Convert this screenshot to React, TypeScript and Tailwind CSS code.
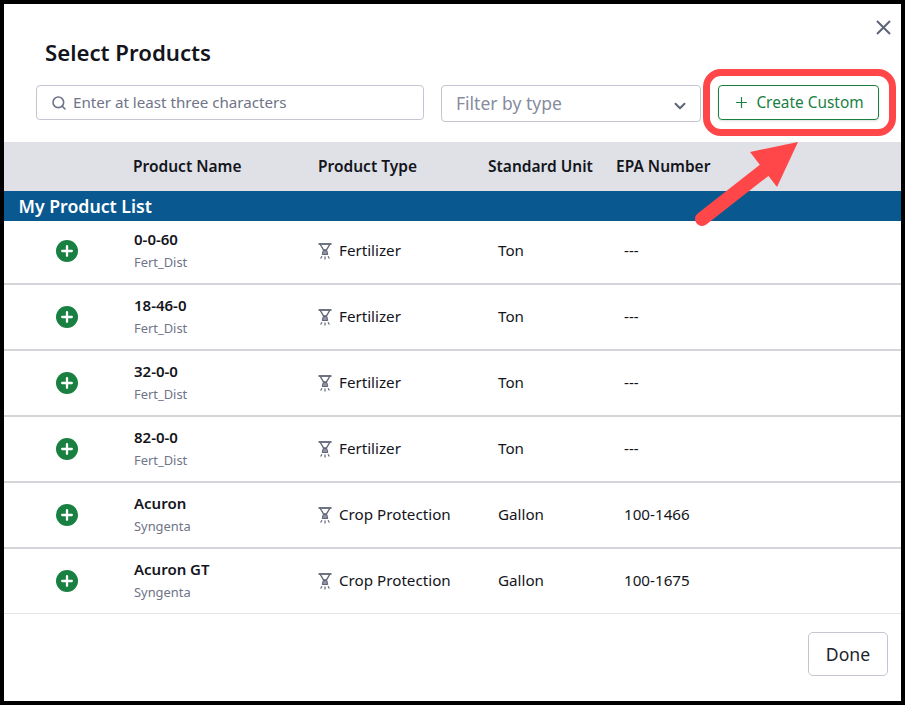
import { Search, ChevronDown, Plus } from "lucide-react"

const products = [
  { name: "0-0-60", maker: "Fert_Dist", type: "Fertilizer", unit: "Ton", epa: "---" },
  { name: "18-46-0", maker: "Fert_Dist", type: "Fertilizer", unit: "Ton", epa: "---" },
  { name: "32-0-0", maker: "Fert_Dist", type: "Fertilizer", unit: "Ton", epa: "---" },
  { name: "82-0-0", maker: "Fert_Dist", type: "Fertilizer", unit: "Ton", epa: "---" },
  { name: "Acuron", maker: "Syngenta", type: "Crop Protection", unit: "Gallon", epa: "100-1466" },
  { name: "Acuron GT", maker: "Syngenta", type: "Crop Protection", unit: "Gallon", epa: "100-1675" },
]

function AddIcon() {
  return (
    <svg width="22" height="22" viewBox="0 0 22 22">
      <circle cx="11" cy="11" r="11" fill="#1a8042" />
      <path d="M11 6.2v9.6M6.2 11h9.6" stroke="#fff" strokeWidth="2.3" strokeLinecap="round" />
    </svg>
  )
}

function SprayerIcon() {
  return (
    <svg className="mt-[3px]" width="14" height="18" viewBox="0 0 14 18" fill="none" stroke="#5f6577" strokeWidth="1.4">
      <path d="M.5 1h13" strokeWidth="1.8" />
      <path d="M2.3 1.5 5.6 7h2.8l3.3-5.5" />
      <path d="M5.2 7.5h3.6l1 4H4.2z" fill="#8d91a0" strokeWidth="1" />
      <path d="M7 13.5v3M4 13.2l-1.4 2.3M10 13.2l1.4 2.3" strokeWidth="1.2" />
    </svg>
  )
}

export default function App() {
  return (
    <div className="relative w-[905px] h-[705px] overflow-hidden bg-black p-[4px] font-['Noto_Sans',sans-serif] text-[#14151c]">
      <div className="relative h-[697px] w-[897px] bg-white">
        <button className="absolute right-[10px] top-[16px] text-[#5d6478]">
          <svg width="15" height="15" viewBox="0 0 15 15" fill="none" stroke="currentColor" strokeWidth="2">
            <path d="M1 1 14 14M14 1 1 14" />
          </svg>
        </button>

        <h1 className="pl-[41px] pt-[33px] text-[22.2px] font-semibold leading-[32px]">Select Products</h1>

        <div className="mt-[16px] flex h-[37px] items-start pl-[32px]">
          <div className="flex h-[35px] w-[388px] items-center rounded-[4px] border border-[#c4c5d2] pl-[14px] text-[15.15px] text-[#6f7488]">
            <Search size={16} strokeWidth={2.4} className="mr-[6px] text-[#6f7488]" />
            Enter at least three characters
          </div>
          <div className="ml-[17px] flex h-[37px] w-[260px] items-center justify-between rounded-[4px] border border-[#c4c5d2] pl-[14px] pr-[11px] text-[17.5px] text-[#878c9e]">
            <span>Filter by type</span>
            <ChevronDown size={18} strokeWidth={2.6} className="mt-[5px] text-[#5d6478]" />
          </div>
          <button className="ml-[17px] flex h-[35px] w-[161px] items-center justify-center rounded-[4px] border border-[#1a8042] text-[15.4px] text-[#1a8042] shadow-sm">
            <Plus size={17} strokeWidth={1.7} className="mr-[6px]" />
            Create Custom
          </button>
        </div>

        <div className="mt-[20px] flex h-[49px] items-center bg-[#dfe1e6] text-[15.5px] font-semibold">
          <span className="ml-[129px] w-[185px]">Product Name</span>
          <span className="w-[170px]">Product Type</span>
          <span className="w-[128px]">Standard Unit</span>
          <span>EPA Number</span>
        </div>

        <div className="flex h-[30px] items-center bg-[#095890] pl-[14.5px] pt-[1px] text-[17.7px] font-semibold text-white">
          My Product List
        </div>

        {products.map((p, i) => (
          <div
            key={p.name}
            className={`flex items-start text-[15.2px] ${i === 0 ? "h-[64px] pt-[8px]" : i === products.length - 1 ? "h-[65px] pt-[10px]" : "h-[66px] pt-[10px]"} ${i === products.length - 1 ? "border-b border-[#e3e4e8]" : "border-b-2 border-[#d4d5d8]"}`}
          >
            <div className="mt-[11px] flex w-[130px] justify-center pr-[4px]">
              <AddIcon />
            </div>
            <div className="w-[184px]">
              <div className="text-[15px] font-semibold leading-[20px]">{p.name}</div>
              <div className="mt-[4px] text-[12.9px] leading-[18px] text-[#6f7488]">{p.maker}</div>
            </div>
            <div className="mt-[10px] flex w-[180px] items-center">
              <SprayerIcon />
              <span className="ml-[7px]">{p.type}</span>
            </div>
            <div className="mt-[10px] w-[126px]">{p.unit}</div>
            <div className="mt-[10px]">{p.epa}</div>
          </div>
        ))}

        <button className="absolute bottom-[25px] right-[13px] h-[44px] w-[80px] rounded-[5px] border border-[#c4c5d2] text-[17.6px] text-[#22232b]">
          Done
        </button>
      </div>

      {/* red annotation drawn on top of the screenshot */}
      <div className="absolute left-[703px] top-[69px] h-[67px] w-[193px] rounded-[18px] border-[7px] border-[#ff4649]" />
      <svg className="absolute left-0 top-0" width="905" height="705" fill="none">
        <path d="M702 219 771 165" stroke="#ff4649" strokeWidth="14" strokeLinecap="round" />
        <path d="M798 142 750 152 777 187z" fill="#ff4649" />
      </svg>
    </div>
  )
}
